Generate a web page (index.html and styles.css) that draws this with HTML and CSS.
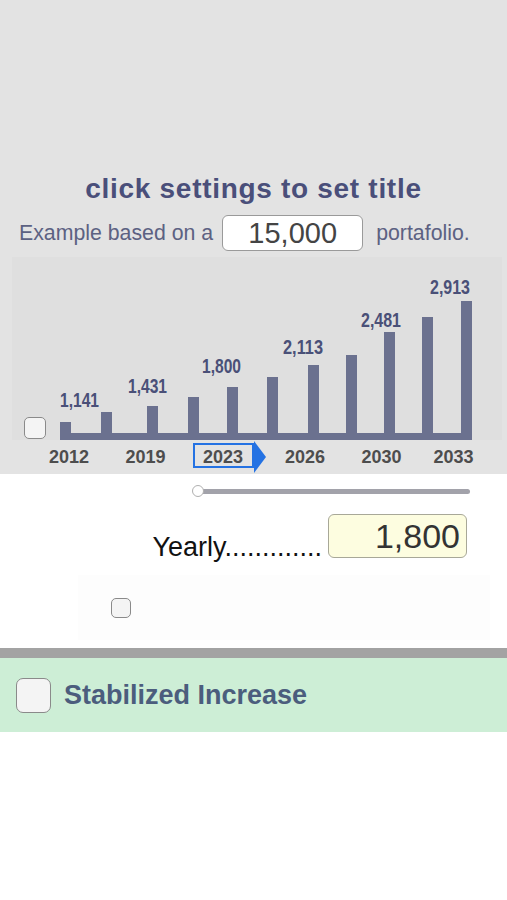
FILE: index.html
```html
<!DOCTYPE html>
<html lang="en">
<head>
    <meta charset="UTF-8">
    <meta name="viewport" content="width=device-width, initial-scale=1.0">
    <title>Portfolio Growth</title>
    <link rel="stylesheet" href="styles.css">
</head>
<body>
    <div class="top">
        <h1 class="title">click settings to set title</h1>
        <div class="base-row">
            <span>Example based on a</span>
            <div class="base-input">15,000</div>
            <span>portafolio.</span>
        </div>
        <div class="chart">
            <svg width="507" height="217" viewBox="0 0 507 217">
                <rect x="12" y="0" width="490" height="183" fill="#dfdfdf"/>
                <g fill="#6b718f">
                    <rect x="60" y="165" width="11" height="18"/>
                    <rect x="101" y="155" width="11" height="28"/>
                    <rect x="147" y="149" width="11" height="34"/>
                    <rect x="188" y="140" width="11" height="43"/>
                    <rect x="227" y="130" width="11" height="53"/>
                    <rect x="267" y="120" width="11" height="63"/>
                    <rect x="308" y="108" width="11" height="75"/>
                    <rect x="346" y="98" width="11" height="85"/>
                    <rect x="384" y="75" width="11" height="108"/>
                    <rect x="422" y="60" width="11" height="123"/>
                    <rect x="461" y="44" width="11" height="139"/>
                    <rect x="60" y="176" width="412" height="7"/>
                </g>
                <g class="bar-label">
                    <text x="60" y="150" textLength="39" lengthAdjust="spacingAndGlyphs">1,141</text>
                    <text x="128" y="136" textLength="39" lengthAdjust="spacingAndGlyphs">1,431</text>
                    <text x="202" y="116" textLength="39" lengthAdjust="spacingAndGlyphs">1,800</text>
                    <text x="283" y="97" textLength="40" lengthAdjust="spacingAndGlyphs">2,113</text>
                    <text x="361" y="70" textLength="40" lengthAdjust="spacingAndGlyphs">2,481</text>
                    <text x="430" y="37" textLength="40" lengthAdjust="spacingAndGlyphs">2,913</text>
                </g>
                <g class="year-label">
                    <text x="69" y="206">2012</text>
                    <text x="145.5" y="206">2019</text>
                    <text x="223" y="206">2023</text>
                    <text x="305" y="206">2026</text>
                    <text x="381.5" y="206">2030</text>
                    <text x="453.5" y="206">2033</text>
                </g>
                <rect x="194" y="187" width="59" height="23" fill="none" stroke="#2472e3" stroke-width="2"/>
                <polygon points="254,184 266,200 254,216" fill="#2472e3"/>
            </svg>
            <span class="check chart-check"></span>
        </div>
    </div>

    <div class="controls">
        <div class="slider">
            <span class="thumb"></span>
        </div>
        <div class="yearly-row">
            <span class="yearly-label">Yearly.............</span>
            <div class="yearly-input">1,800</div>
        </div>
        <div class="panel">
            <span class="check small-check"></span>
        </div>
    </div>

    <div class="divider"></div>
    <div class="stabilized">
        <span class="check big-check"></span>
        <span class="stabilized-label">Stabilized Increase</span>
    </div>
</body>
</html>
```

FILE: styles.css
```css
body {
    margin: 0;
    font-family: "Liberation Sans", Arial, sans-serif;
    background-color: #fff;
}
.top {
    background-color: #e3e3e3;
    padding-top: 173px;
    height: 474px;
    box-sizing: border-box;
}
.title {
    margin: 0;
    text-align: center;
    font-size: 28px;
    line-height: 31px;
    letter-spacing: 0.7px;
    font-weight: bold;
    color: #4a4f7a;
}
.base-row {
    display: flex;
    align-items: center;
    margin-top: 11px;
    padding-left: 19px;
    font-size: 21.3px;
    color: #5c6182;
}
.base-input {
    width: 141px;
    height: 36px;
    box-sizing: border-box;
    margin: 0 13px 0 9px;
    background-color: #fff;
    border: 1px solid #9a9a9a;
    border-radius: 6px;
    text-align: center;
    font-size: 29px;
    line-height: 34px;
    color: #444;
}
.chart {
    position: relative;
    margin-top: 6px;
    height: 217px;
}
.chart svg {
    display: block;
}
.bar-label text {
    font-family: "Liberation Sans", Arial, sans-serif;
    font-weight: bold;
    font-size: 20px;
    fill: #4a5078;
}
.year-label text {
    font-family: "Liberation Sans", Arial, sans-serif;
    font-weight: bold;
    font-size: 18px;
    fill: #4d4d4d;
    text-anchor: middle;
}
.check {
    display: block;
    box-sizing: border-box;
    background-color: #f4f4f4;
    border: 1.5px solid #8a8a8a;
}
.chart-check {
    position: absolute;
    left: 24px;
    top: 160px;
    width: 22px;
    height: 22px;
    border-radius: 5px;
}
.controls {
    padding-top: 15px;
}
.slider {
    position: relative;
    margin-left: 193px;
    width: 277px;
    height: 5px;
    border-radius: 3px;
    background-color: #a2a2aa;
}
.thumb {
    position: absolute;
    left: -1px;
    top: -4px;
    width: 12px;
    height: 12px;
    box-sizing: border-box;
    border-radius: 50%;
    background-color: #fff;
    border: 1px solid #b0b0b0;
}
.yearly-row {
    display: flex;
    align-items: flex-end;
    justify-content: flex-end;
    gap: 6px;
    margin-top: 20px;
    padding-right: 40px;
}
.yearly-label {
    font-size: 27px;
    line-height: 30px;
    color: #111;
    margin-bottom: -4px;
}
.yearly-input {
    width: 139px;
    height: 44px;
    box-sizing: border-box;
    padding-right: 6px;
    background-color: #fdfde0;
    border: 1px solid #a8a898;
    border-radius: 6px;
    text-align: right;
    font-size: 34px;
    line-height: 43px;
    color: #333;
}
.panel {
    display: flex;
    align-items: center;
    margin: 17px 17px 0 78px;
    height: 65px;
    padding-left: 33px;
    background-color: #fdfdfd;
}
.small-check {
    width: 20px;
    height: 20px;
    border-radius: 5px;
}
.divider {
    margin-top: 8px;
    height: 10px;
    background-color: #a3a3a3;
}
.stabilized {
    display: flex;
    align-items: center;
    height: 74px;
    padding-left: 16px;
    background-color: #cdeed6;
}
.big-check {
    width: 35px;
    height: 35px;
    border-radius: 7px;
}
.stabilized-label {
    margin-left: 13px;
    font-size: 27px;
    font-weight: bold;
    color: #4b5d7d;
}
```
